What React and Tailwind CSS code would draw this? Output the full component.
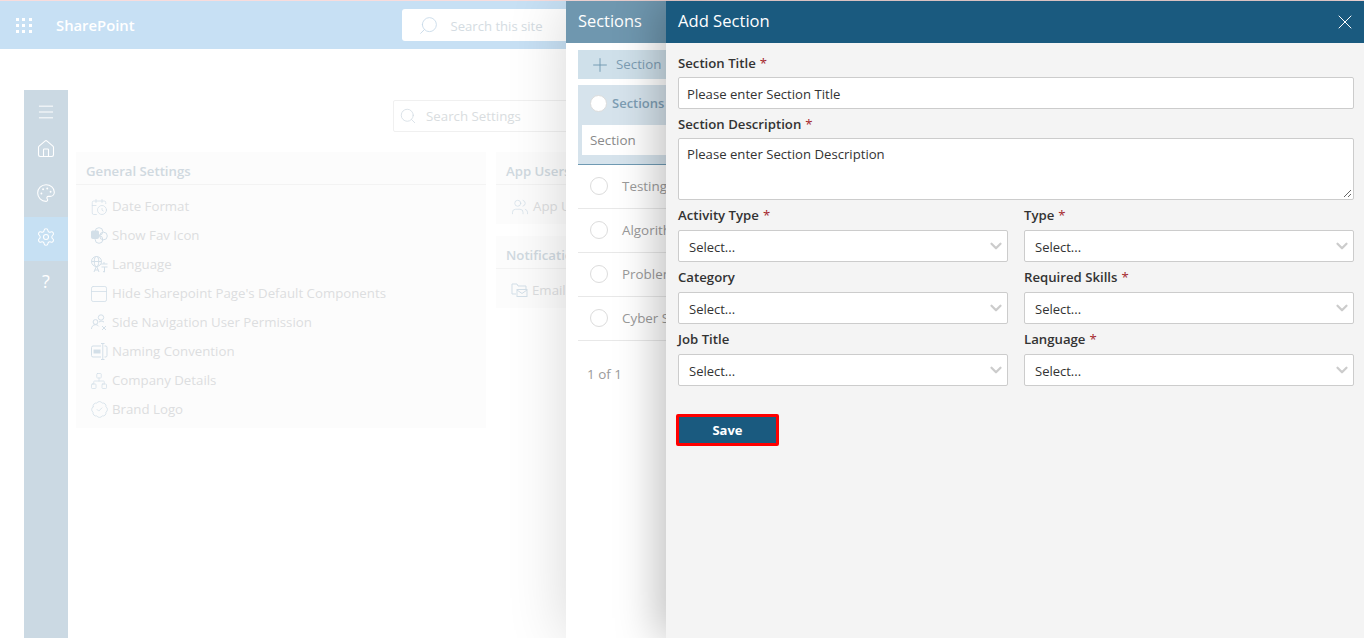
import React from 'react';
import { Menu, Home, Palette, Settings, Search, CalendarClock, PanelTop, Network, BadgeCheck, Users, Plus, X, ChevronDown } from 'lucide-react';

const font = { fontFamily: '"Open Sans", "Noto Sans", sans-serif' };
const tint = '#d3dfe8';

const FavIcon = () => (
  <svg width="17" height="17" viewBox="0 0 17 17" fill="none" stroke={tint} strokeWidth="1">
    <rect x="0.5" y="4" width="7" height="7.5" rx="1" fill={tint} />
    <circle cx="8" cy="4.5" r="3.8" />
    <circle cx="12.5" cy="9" r="3.8" />
    <circle cx="8" cy="12.5" r="3.8" />
  </svg>
);

const LanguageIcon = () => (
  <svg width="17" height="17" viewBox="0 0 17 17" fill="none" stroke={tint} strokeWidth="1">
    <circle cx="5.5" cy="5.5" r="5" />
    <ellipse cx="5.5" cy="5.5" rx="2.2" ry="5" />
    <path d="M0.5 5.5h10" />
    <path d="M3 16l2.5-6 2.5 6M3.8 14h3.4" />
    <path d="M10 8h6.5M13 6v2M10.5 11h6M13.5 11v5l-1.5-.5" />
  </svg>
);

const UserPermIcon = () => (
  <svg width="17" height="17" viewBox="0 0 17 17" fill="none" stroke={tint} strokeWidth="1">
    <circle cx="10" cy="3.5" r="2.7" />
    <circle cx="4.5" cy="8" r="2.4" />
    <path d="M0.5 15c0-2.5 1.6-4.3 4-4.3 1.4 0 2.5.6 3.2 1.6" />
    <path d="M8 8c1.5-1 3.5-1 5 0M11 12l4 4M15 12l-4 4" />
  </svg>
);

const NamingIcon = () => (
  <svg width="17" height="17" viewBox="0 0 17 17" fill="none" stroke={tint} strokeWidth="1">
    <path d="M10 3H2a1.5 1.5 0 0 0-1.5 1.5v8A1.5 1.5 0 0 0 2 14h8" />
    <path d="M13.5 3H15a1.5 1.5 0 0 1 1 1.5v8A1.5 1.5 0 0 1 15 14h-1.5" />
    <path d="M10 0.5h3.5M10 16.5h3.5M11.8 0.5v16" />
    <rect x="3" y="7" width="6" height="3" fill={tint} />
  </svg>
);

const MailFolderIcon = () => (
  <svg width="17" height="17" viewBox="0 0 17 17" fill="none" stroke={tint} strokeWidth="1">
    <path d="M1 12V2h5l1 2h8v3" />
    <path d="M1 12h4" />
    <rect x="6" y="7.5" width="10" height="7" />
    <path d="M6 8l5 3.5L16 8" />
  </svg>
);

const settings = [
  { icon: <CalendarClock size={18} strokeWidth={1} color={tint} />, label: 'Date Format' },
  { icon: <FavIcon />, label: 'Show Fav Icon' },
  { icon: <LanguageIcon />, label: 'Language' },
  { icon: <PanelTop size={20} strokeWidth={1} color={tint} />, label: "Hide Sharepoint Page's Default Components" },
  { icon: <UserPermIcon />, label: 'Side Navigation User Permission' },
  { icon: <NamingIcon />, label: 'Naming Convention' },
  { icon: <Network size={18} strokeWidth={1} color={tint} />, label: 'Company Details' },
  { icon: <BadgeCheck size={19} strokeWidth={1} color={tint} />, label: 'Brand Logo' },
];

const SectionRow = ({ name }) => (
  <div className="flex h-11 items-center border-b border-[#e8e8e8] pl-[12px] whitespace-nowrap">
    <span className="mb-[2px] h-[18px] w-[18px] shrink-0 rounded-full border border-[#dcdcdc] bg-white" />
    <span className="ml-[14px] text-[13.4px] text-[#9a9a9a]">{name}</span>
  </div>
);

const Label = ({ text, required, tall }) => (
  <div className={tall ? 'flex h-[24px] items-start text-[13.2px] font-semibold leading-[19px] text-[#333]' : 'flex h-[23px] items-start text-[13.2px] font-semibold leading-[18px] text-[#333]'}>
    {text}
    {required && <span className="ml-1 font-normal text-[#a4262c]">*</span>}
  </div>
);

const SelectField = ({ label, required }) => (
  <div>
    <Label text={label} required={required} tall />
    <div className="flex h-8 items-center justify-between rounded-[2px] border border-[#ccc] bg-white pl-[10px] pr-[2px] text-[13px] text-[#333]">
      <span className="pt-[3px]">Select...</span>
      <ChevronDown size={18} strokeWidth={3} color="#ccc" />
    </div>
  </div>
);

export default function App() {
  return (
    <div style={font} className="relative h-[638px] w-[1364px] overflow-hidden bg-white">
      <div className="h-px bg-[#f8dcdc]" />

      {/* site header */}
      <header className="flex h-12 items-center bg-[#c7e0f4]">
        <div className="ml-4 grid w-4 grid-cols-3 gap-[3px]">
          {Array.from({ length: 9 }).map((_, i) => (
            <span key={i} className="h-[3px] w-[3px] bg-white" />
          ))}
        </div>
        <span className="ml-6 text-[14.8px] font-semibold text-white">SharePoint</span>
        <div className="ml-[267px] flex h-8 w-[320px] items-center rounded-[3px] bg-white pl-[16px]">
          <Search size={21} strokeWidth={1} color="#c7d9e8" className="-scale-x-100" />
          <span className="ml-[12px] pt-[3px] text-[13.1px] text-[#d4dce2]">Search this site</span>
        </div>
      </header>

      {/* settings page behind the panels */}
      <div className="ml-6 mt-[41px] flex">
        <nav className="flex h-[548px] w-11 flex-col items-center bg-[#cbd9e3] text-white">
          <div className="flex h-[39px] items-start pt-[12px]"><Menu size={20} strokeWidth={1.2} /></div>
          <div className="flex h-[44px] w-full justify-center pt-[10px]"><Home size={20} strokeWidth={1.3} /></div>
          <div className="flex h-[44px] w-full justify-center pt-[10px]"><Palette size={20} strokeWidth={1.3} /></div>
          <div className="flex h-[44px] w-full justify-center bg-[#c6e0f3] pt-[10px]"><Settings size={20} strokeWidth={1.3} /></div>
          <div className="flex h-[44px] w-full justify-center pt-[7px] text-[18px]">?</div>
        </nav>

        <div className="ml-2 flex-1">
          <div className="ml-[317px] mt-[10px] flex h-8 w-[300px] items-center rounded-[2px] border border-[#f0f0f0] pl-[5px]">
            <Search size={18} strokeWidth={1} color="#d0dae1" />
            <span className="ml-[9px] pt-[2px] text-[13.3px] text-[#d9dde0]">Search Settings</span>
          </div>

          <div className="mt-[20px] flex gap-[10px]">
            <section className="h-[276px] w-[410px] bg-[#fcfcfc]">
              <h2 className="flex h-[33px] items-center border-b border-[#f3f3f3] pl-[10px] pt-[7px] text-[13.2px] font-semibold text-[#d0d9e0]">General Settings</h2>
              <ul className="mt-[7px]">
                {settings.map((s) => (
                  <li key={s.label} className="flex h-[29px] items-center pl-[15px] text-[13.25px] text-[#dcdee0]">
                    <span className="mr-[5px] flex w-4 justify-center [&>svg]:shrink-0">{s.icon}</span>
                    {s.label}
                  </li>
                ))}
              </ul>
            </section>

            <div className="w-[300px]">
              <section className="h-[72px] bg-[#fcfcfc]">
                <h2 className="flex h-[33px] items-center border-b border-[#f3f3f3] pl-[10px] pt-[7px] text-[13.2px] font-semibold text-[#d0d9e0]">App Users</h2>
                <div className="mt-[7px] flex h-[29px] items-center pl-[15px] text-[13.25px] text-[#dcdee0]">
                  <Users size={18} strokeWidth={1} color={tint} className="mr-[4px] shrink-0" />
                  App Users
                </div>
              </section>
              <section className="mt-[12px] h-[72px] bg-[#fcfcfc]">
                <h2 className="flex h-[33px] items-center border-b border-[#f3f3f3] pl-[10px] pt-[7px] text-[13.2px] font-semibold text-[#d0d9e0]">Notifications</h2>
                <div className="mt-[7px] flex h-[29px] items-center pl-[15px] text-[13.25px] text-[#dcdee0]">
                  <span className="mr-[4px]"><MailFolderIcon /></span>
                  Email
                </div>
              </section>
            </div>
          </div>
        </div>
      </div>

      {/* Sections panel */}
      <aside className="absolute bottom-0 left-[566px] top-px w-[110px] overflow-hidden bg-white shadow-[0_0_60px_rgba(0,0,0,0.16)]">
        <div className="flex h-[42px] items-center bg-[#6f97af] pb-[2px] pl-[12px] text-[16.4px] text-white">Sections</div>
        <div className="pl-[12px]">
          <div className="mt-[7px] flex h-[29px] items-center bg-[#cfe0ea] pl-[11px] text-[13.3px] text-[#7d9db3] whitespace-nowrap">
            <Plus size={22} strokeWidth={1} color="#6f97af" />
            <span className="ml-[5px]">Section</span>
          </div>
          <div className="mt-[6px] h-[80px] border-b border-[#6f9ab3] bg-[#d6e3ec] pl-[4px] pt-[9px]">
            <div className="flex items-center pl-[8px]">
              <span className="h-[17px] w-[17px] shrink-0 rounded-full border border-[#dcdcdc] bg-white" />
              <span className="ml-[5px] whitespace-nowrap text-[13px] font-semibold text-[#7d9db3]">Sections</span>
            </div>
            <div className="mt-[11px] flex h-[30px] items-center bg-white pl-[8px] pt-[2px] text-[13.4px] text-[#8a8a8a]">Section</div>
          </div>
          <SectionRow name="Testing" />
          <SectionRow name="Algorithm" />
          <SectionRow name="Problem" />
          <SectionRow name="Cyber Security" />
          <div className="mt-[23px] pl-[9px] text-[13.4px] text-[#9a9a9a]">1 of 1</div>
        </div>
      </aside>

      {/* Add Section panel */}
      <aside className="absolute bottom-0 left-[666px] right-0 top-px bg-[#f4f4f4] shadow-[-8px_0_40px_rgba(0,0,0,0.25)]">
        <div className="flex h-[42px] items-center justify-between bg-[#1a5a7f] pl-[12px] pr-[7px] text-white">
          <span className="pb-[2px] text-[16.6px]">Add Section</span>
          <X size={24} strokeWidth={1} />
        </div>
        <div className="pl-[12px] pr-[10px] pt-[11px]">
          <Label text="Section Title" required />
          <div className="mb-[6px] flex h-8 items-center rounded-[2px] border border-[#ccc] bg-white pl-2 pt-[3px] text-[13.15px] text-[#333]">Please enter Section Title</div>
          <Label text="Section Description" required />
          <div className="relative mb-[6px] h-[62px] rounded-[2px] border border-[#ccc] bg-white pl-2 pt-[6px] text-[13.15px] text-[#333]">
            Please enter Section Description
            <svg className="absolute bottom-px right-px" width="9" height="9" viewBox="0 0 9 9" stroke="#666" strokeWidth="1">
              <path d="M1 8l7-7M5 8l3-3" />
            </svg>
          </div>
          <div className="grid grid-cols-[330px_330px] gap-x-4 gap-y-[6px]">
            <SelectField label="Activity Type" required />
            <SelectField label="Type" required />
            <SelectField label="Category" />
            <SelectField label="Required Skills" required />
            <SelectField label="Job Title" />
            <SelectField label="Language" required />
          </div>
          <button className="-ml-[2px] mt-[28px] h-8 w-[103px] rounded-[2px] border-[3px] border-[#f00] bg-[#1a5a7f] pt-px text-[13px] font-bold text-white">Save</button>
        </div>
      </aside>
    </div>
  );
}
